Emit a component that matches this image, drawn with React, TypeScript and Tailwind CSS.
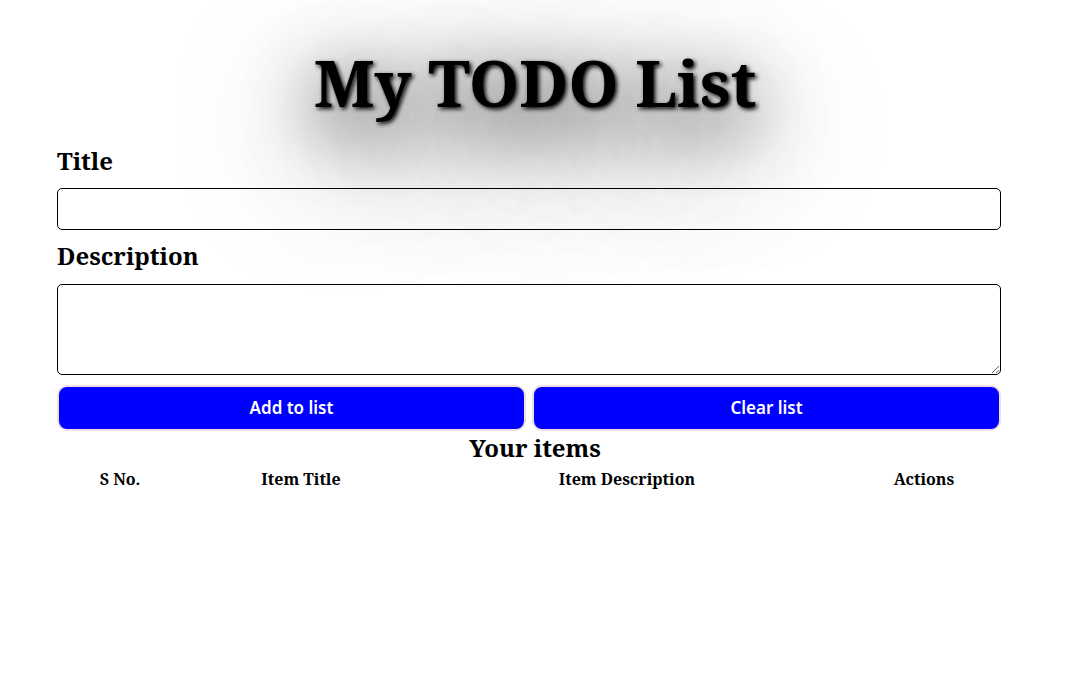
export default function App() {
  const serif = { fontFamily: '"Noto Serif", "DejaVu Serif", serif' };
  return (
    <div className="min-h-[689px] bg-white text-black" style={serif}>
      <h1 className="pt-[37px] text-center text-[64px] font-bold leading-[92px] [text-shadow:2px_2px_4px_#000,0_20px_70px_#000,0_40px_140px_#000]">
        My TODO List
      </h1>

      <form className="ml-[57px] w-[944px]" onSubmit={(e) => e.preventDefault()}>
        <label htmlFor="title" className="block pt-[16px] text-2xl font-bold leading-[32px]">
          Title
        </label>
        <input
          id="title"
          type="text"
          className="mt-[11px] block h-[42px] w-full rounded-[5px] border border-black bg-white px-2"
        />
        <label htmlFor="desc" className="mt-[10px] block text-2xl font-bold leading-[32px]">
          Description
        </label>
        <textarea
          id="desc"
          className="mt-[12px] block h-[91px] w-full rounded-[5px] border border-black bg-white px-2"
        />
        <div className="mt-[10px] flex gap-[6px]" style={{ fontFamily: 'system-ui, "Open Sans", sans-serif' }}>
          <button className="h-[46px] flex-1 rounded-[10px] border-2 border-[#f0dede] bg-[#0000ff] text-[17px] font-semibold text-white">
            Add to list
          </button>
          <button className="h-[46px] flex-1 rounded-[10px] border-2 border-[#f0dede] bg-[#0000ff] text-[17px] font-semibold text-white">
            Clear list
          </button>
        </div>
      </form>

      <h2 className="mt-[1px] text-center text-2xl font-bold leading-[32px]">Your items</h2>
      <div className="ml-[57px] flex text-base font-bold leading-[30px]">
        <div className="w-[126px] text-center">S No.</div>
        <div className="w-[236px] text-center">Item Title</div>
        <div className="w-[416px] text-center">Item Description</div>
        <div className="w-[178px] text-center">Actions</div>
      </div>
    </div>
  );
}
